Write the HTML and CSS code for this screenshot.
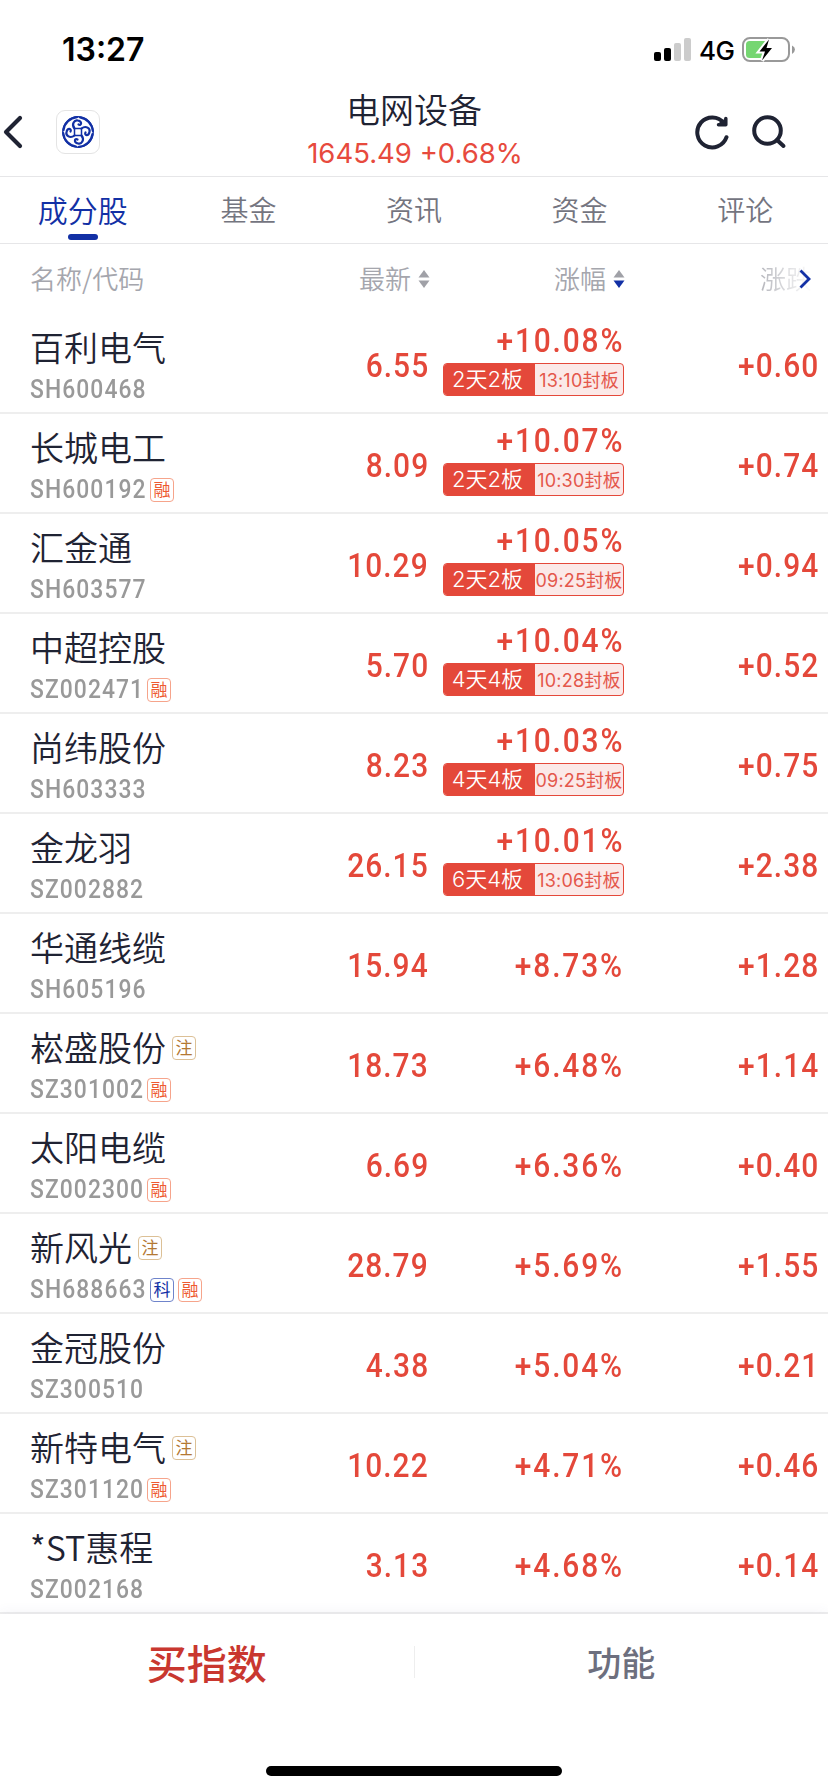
FILE: index.html
```html
<!DOCTYPE html>
<html lang="zh-CN">
<head>
  <meta charset="UTF-8">
  <meta name="viewport" content="width=device-width, initial-scale=1.0">
  <title>电网设备</title>
  <link rel="stylesheet" href="styles.css">
</head>
<body>
  <div class="status-bar">
    <span class="time">13:27</span>
    <div class="status-icons">
      <svg class="signal" width="38" height="24" viewBox="0 0 38 24">
        <rect x="0" y="14" width="7" height="9" rx="2"/>
        <rect x="10" y="10" width="7" height="13" rx="2"/>
        <rect x="20" y="5" width="7" height="18" rx="2" fill="#ccc"/>
        <rect x="30" y="0" width="7" height="23" rx="2" fill="#ccc"/>
      </svg>
      <span class="network">4G</span>
      <svg class="battery" width="54" height="28" viewBox="0 0 54 28">
        <rect x="1" y="2" width="46" height="23" rx="7" fill="none" stroke="#999" stroke-width="2"/>
        <rect x="4" y="5" width="21" height="17" rx="3.5" fill="#76d672"/>
        <path d="M50 9.5Q53 11 53 13.5T50 18Z" fill="#999"/>
        <path d="M27 3.500L17.500 15.500H23L20 24.500L30 12H24.500Z" fill="#000" stroke="#fff" stroke-width="4" paint-order="stroke"/>
      </svg>
    </div>
  </div>

  <header class="header">
    <div class="header-left">
      <svg class="back" width="24" height="36" viewBox="0 0 24 36">
        <path d="M20 4L6 18L20 32" fill="none" stroke="#1f2333" stroke-width="4.200" stroke-linecap="round" stroke-linejoin="round"/>
      </svg>
      <div class="logo">
        <svg width="34" height="34" viewBox="-17 -17 34 34" fill="none" stroke="#1230a5" stroke-linecap="round">
          <circle r="15.200" stroke-width="1.400"/>
          <g id="swirl">
            <path d="M-14.500 -2C-13.500 -9 -8 -14 -1 -14.800" stroke-width="2.200"/>
            <path d="M-3.500 -3.500C-7 -8 -3.500 -12.500 0 -11.500C4.500 -10.500 3.500 -6 .5 -7.500" stroke-width="2.200"/>
            <path d="M-3.500 -3.500H3.500" stroke-width="1.500"/>
          </g>
          <use href="#swirl" transform="rotate(90)"/>
          <use href="#swirl" transform="rotate(180)"/>
          <use href="#swirl" transform="rotate(270)"/>
        </svg>
      </div>
    </div>
    <div class="header-title">
      <h1>电网设备</h1>
      <p>1645.49 +0.68%</p>
    </div>
    <div class="header-right">
      <svg width="36" height="36" viewBox="0 0 36 36" fill="none" stroke="#1f2333" stroke-width="4" stroke-linecap="round" stroke-linejoin="round">
        <path d="M32.500 23.200A15 15 0 1 1 30 9"/>
        <path d="M31.800 4.500V10.800H24.500" stroke-width="3.500"/>
        <path d="M30 7V10H26Z" stroke-width="3"/>
      </svg>
      <svg width="36" height="36" viewBox="0 0 36 36" fill="none" stroke="#1f2333" stroke-width="4" stroke-linecap="round">
        <circle cx="16.500" cy="16.500" r="13.300"/>
        <path d="M26 26L32.500 32"/>
      </svg>
    </div>
  </header>

  <nav class="tabs">
    <a class="tab active">成分股</a>
    <a class="tab">基金</a>
    <a class="tab">资讯</a>
    <a class="tab">资金</a>
    <a class="tab">评论</a>
  </nav>

  <div class="columns">
    <span class="col-name">名称/代码</span>
    <span class="col-price">最新<svg class="sort" width="12" height="18" viewBox="0 0 12 18"><path d="M6 0L11.500 7.500H.5Z"/><path d="M6 18L.5 10.500H11.500Z"/></svg></span>
    <span class="col-pct">涨幅<svg class="sort" width="12" height="18" viewBox="0 0 12 18"><path d="M6 0L11.500 7.500H.5Z"/><path class="on" d="M6 18L.5 10.500H11.500Z"/></svg></span>
    <span class="col-change"><span class="fade">涨跌</span><svg class="more" width="14" height="22" viewBox="0 0 14 22"><path d="M2.500 2.500L11 11L2.500 19.500" fill="none" stroke="#1230a5" stroke-width="2.800"/></svg></span>
  </div>

  <main class="list">
    <div class="row">
      <div class="stock"><div class="name">百利电气</div><div class="info"><span class="code">SH600468</span></div></div>
      <div class="price"><span class="num">6.55</span></div>
      <div class="pct limit"><span class="num">+10.08%</span><div class="board"><b>2天2板</b><i>13:10封板</i></div></div>
      <div class="change"><span class="num">+0.60</span></div>
    </div>
    <div class="row">
      <div class="stock"><div class="name">长城电工</div><div class="info"><span class="code">SH600192</span><span class="tag rong">融</span></div></div>
      <div class="price"><span class="num">8.09</span></div>
      <div class="pct limit"><span class="num">+10.07%</span><div class="board"><b>2天2板</b><i>10:30封板</i></div></div>
      <div class="change"><span class="num">+0.74</span></div>
    </div>
    <div class="row">
      <div class="stock"><div class="name">汇金通</div><div class="info"><span class="code">SH603577</span></div></div>
      <div class="price"><span class="num">10.29</span></div>
      <div class="pct limit"><span class="num">+10.05%</span><div class="board"><b>2天2板</b><i>09:25封板</i></div></div>
      <div class="change"><span class="num">+0.94</span></div>
    </div>
    <div class="row">
      <div class="stock"><div class="name">中超控股</div><div class="info"><span class="code sz">SZ002471</span><span class="tag rong">融</span></div></div>
      <div class="price"><span class="num">5.70</span></div>
      <div class="pct limit"><span class="num">+10.04%</span><div class="board"><b>4天4板</b><i>10:28封板</i></div></div>
      <div class="change"><span class="num">+0.52</span></div>
    </div>
    <div class="row">
      <div class="stock"><div class="name">尚纬股份</div><div class="info"><span class="code">SH603333</span></div></div>
      <div class="price"><span class="num">8.23</span></div>
      <div class="pct limit"><span class="num">+10.03%</span><div class="board"><b>4天4板</b><i>09:25封板</i></div></div>
      <div class="change"><span class="num">+0.75</span></div>
    </div>
    <div class="row">
      <div class="stock"><div class="name">金龙羽</div><div class="info"><span class="code sz">SZ002882</span></div></div>
      <div class="price"><span class="num">26.15</span></div>
      <div class="pct limit"><span class="num">+10.01%</span><div class="board"><b>6天4板</b><i>13:06封板</i></div></div>
      <div class="change"><span class="num">+2.38</span></div>
    </div>
    <div class="row">
      <div class="stock"><div class="name">华通线缆</div><div class="info"><span class="code">SH605196</span></div></div>
      <div class="price"><span class="num">15.94</span></div>
      <div class="pct"><span class="num">+8.73%</span></div>
      <div class="change"><span class="num">+1.28</span></div>
    </div>
    <div class="row">
      <div class="stock"><div class="name">崧盛股份<span class="tag zhu">注</span></div><div class="info"><span class="code sz">SZ301002</span><span class="tag rong">融</span></div></div>
      <div class="price"><span class="num">18.73</span></div>
      <div class="pct"><span class="num">+6.48%</span></div>
      <div class="change"><span class="num">+1.14</span></div>
    </div>
    <div class="row">
      <div class="stock"><div class="name">太阳电缆</div><div class="info"><span class="code sz">SZ002300</span><span class="tag rong">融</span></div></div>
      <div class="price"><span class="num">6.69</span></div>
      <div class="pct"><span class="num">+6.36%</span></div>
      <div class="change"><span class="num">+0.40</span></div>
    </div>
    <div class="row">
      <div class="stock"><div class="name">新风光<span class="tag zhu">注</span></div><div class="info"><span class="code">SH688663</span><span class="tag ke">科</span><span class="tag rong">融</span></div></div>
      <div class="price"><span class="num">28.79</span></div>
      <div class="pct"><span class="num">+5.69%</span></div>
      <div class="change"><span class="num">+1.55</span></div>
    </div>
    <div class="row">
      <div class="stock"><div class="name">金冠股份</div><div class="info"><span class="code sz">SZ300510</span></div></div>
      <div class="price"><span class="num">4.38</span></div>
      <div class="pct"><span class="num">+5.04%</span></div>
      <div class="change"><span class="num">+0.21</span></div>
    </div>
    <div class="row">
      <div class="stock"><div class="name">新特电气<span class="tag zhu">注</span></div><div class="info"><span class="code sz">SZ301120</span><span class="tag rong">融</span></div></div>
      <div class="price"><span class="num">10.22</span></div>
      <div class="pct"><span class="num">+4.71%</span></div>
      <div class="change"><span class="num">+0.46</span></div>
    </div>
    <div class="row">
      <div class="stock"><div class="name">*ST惠程</div><div class="info"><span class="code sz">SZ002168</span></div></div>
      <div class="price"><span class="num">3.13</span></div>
      <div class="pct"><span class="num">+4.68%</span></div>
      <div class="change"><span class="num">+0.14</span></div>
    </div>
  </main>

  <footer class="footer">
    <div class="actions">
      <a class="buy">买指数</a>
      <a class="func">功能</a>
    </div>
    <div class="home-indicator"></div>
  </footer>
</body>
</html>
```

FILE: styles.css
```css
* {
  margin: 0;
  padding: 0;
  box-sizing: border-box;
}

body {
  width: 828px;
  height: 1792px;
  overflow: hidden;
  background: #fff;
  color: #1f2333;
  font-family: "Noto Sans CJK SC", sans-serif;
  font-weight: 350;
}

svg {
  display: block;
  flex: none;
}

/* status bar */
.status-bar {
  display: flex;
  justify-content: space-between;
  height: 88px;
  padding: 32px 32px 0 62px;
  font-family: Inter, sans-serif;
  color: #000;
}

.time {
  font-size: 32px;
  font-weight: 600;
  line-height: 36px;
}

.status-icons {
  display: flex;
  align-items: center;
  height: 36px;
}

.network {
  width: 35px;
  margin: 0 8px 0 7px;
  font-size: 26px;
  font-weight: 500;
  letter-spacing: -0.5px;
}

/* header */
.header {
  display: grid;
  grid-template-columns: 1fr 240px 1fr;
  height: 89px;
  border-bottom: 1px solid #e6e6e8;
}

.header-left {
  display: flex;
  align-items: center;
  gap: 32px;
}

.logo {
  display: flex;
  align-items: center;
  justify-content: center;
  width: 44px;
  height: 44px;
  border: 1px solid #e4e4e4;
  border-radius: 9px;
}

.header-title {
  text-align: center;
  white-space: nowrap;
}

.header-title h1 {
  font-size: 34px;
  font-weight: 350;
  line-height: 42px;
}

.header-title p {
  padding-left: 2px;
  font-family: Inter, sans-serif;
  font-size: 27.5px;
  font-weight: 400;
  line-height: 46px;
  color: #e74a3d;
}

.header-right {
  display: flex;
  align-items: center;
  justify-content: flex-end;
  gap: 21px;
  padding-right: 41px;
}

/* tabs */
.tabs {
  display: flex;
  height: 67px;
  border-bottom: 1px solid #e6e6e8;
}

.tab {
  flex: 1;
  font-size: 28px;
  line-height: 65px;
  text-align: center;
  color: #74757f;
}

.tab.active {
  font-size: 30px;
  color: #1230a5;
}

.tab.active::after {
  content: "";
  display: block;
  width: 30px;
  height: 6px;
  margin: -8px auto 0;
  border-radius: 3px;
  background: #1230a5;
}

/* table */
.columns,
.row {
  display: grid;
  grid-template-columns: 270px 128px 195px 195px;
  padding: 0 10px 0 30px;
}

.columns {
  align-items: center;
  height: 70px;
  font-size: 26px;
  line-height: 36px;
  color: #a5a6ad;
}

.columns > span {
  margin-top: -2px;
}

.col-price,
.col-pct {
  display: flex;
  align-items: center;
  justify-content: flex-end;
  gap: 7px;
  margin-right: -2px;
}

.col-change {
  display: flex;
  align-items: center;
  justify-content: flex-end;
  padding-right: 6px;
}

.fade {
  width: 52px;
  margin-right: -14px;
  background: linear-gradient(90deg, #b5b6bc, #fff);
  background-clip: text;
  -webkit-background-clip: text;
  color: transparent;
}

.sort,
.more {
  margin-top: 2px;
}

.sort path {
  fill: #a0a1a7;
}

.sort .on {
  fill: #1230a5;
}

.row {
  height: 100px;
  border-bottom: 2px solid #eee;
}

.stock {
  padding-top: 12px;
}

.name {
  display: flex;
  align-items: center;
  height: 40px;
  font-size: 34px;
  white-space: nowrap;
}

.info {
  display: flex;
  align-items: center;
  height: 44px;
  padding-top: 1px;
}

.info .tag {
  margin-top: 3px;
}

.code {
  width: 116px;
  margin-right: 4px;
  font-family: Roboto, sans-serif;
  font-size: 26px;
  font-weight: 500;
  letter-spacing: 1.2px;
  white-space: nowrap;
  color: #999;
  transform: scaleX(0.88);
  transform-origin: left;
}

.code.sz {
  width: 113px;
}

.tag {
  width: 24px;
  height: 24px;
  margin-right: 4px;
  border: 1px solid;
  border-radius: 4px;
  font-size: 17px;
  font-weight: 400;
  line-height: 20px;
  text-align: center;
}

.rong {
  border-color: #f6a48b;
  color: #ee5a30;
}

.ke {
  border-color: #6f84cb;
  color: #1230a5;
}

.zhu {
  margin-top: 4px;
  margin-left: 6px;
  border-color: #dcc096;
  color: #b37834;
}

.price,
.pct,
.change {
  display: flex;
  flex-direction: column;
  align-items: flex-end;
  justify-content: center;
  padding-top: 4px;
}

.pct.limit {
  justify-content: flex-start;
  padding-top: 6px;
}

/* condensed figures */
.num {
  margin-right: -1px;
  font-family: Roboto, sans-serif;
  font-size: 34px;
  font-weight: 500;
  line-height: 40px;
  letter-spacing: 1.2px;
  color: #e4483a;
  transform: scaleX(0.88);
  transform-origin: right;
}

.pct .num {
  letter-spacing: 2.1px;
}

.board {
  display: flex;
  width: 181px;
  height: 33px;
  margin: 3px -1px 0 0;
  border: 1px solid #e4483a;
  border-radius: 4px;
  background: #fbe9e8;
  overflow: hidden;
  white-space: nowrap;
}

.board b {
  width: 91px;
  padding-right: 4px;
  background: #e4483a;
  color: #fff;
  font-family: Inter, "Noto Sans CJK SC", sans-serif;
  font-size: 22px;
  font-weight: 350;
  line-height: 31px;
  text-align: center;
}

.board i {
  flex: 1;
  font-family: Inter, "Noto Sans CJK SC", sans-serif;
  font-size: 18px;
  font-style: normal;
  font-weight: 400;
  letter-spacing: 0.2px;
  line-height: 34px;
  text-align: center;
  color: #e4574b;
}

/* bottom bar */
.footer {
  height: 178px;
  box-shadow: 0 -2px 12px rgba(60, 70, 140, 0.06);
}

.actions {
  display: flex;
  align-items: center;
  height: 96px;
}

.actions a {
  flex: 1;
  text-align: center;
}

.buy {
  border-right: 1px solid #eee;
  font-size: 40px;
  font-weight: 500;
  line-height: 32px;
  color: #c9372f;
}

.func {
  font-size: 34px;
  font-weight: 500;
  line-height: 32px;
  color: #6d6f7e;
}

.home-indicator {
  width: 296px;
  height: 10px;
  margin: 56px auto 0;
  border-radius: 5px;
  background: #000;
}
```
